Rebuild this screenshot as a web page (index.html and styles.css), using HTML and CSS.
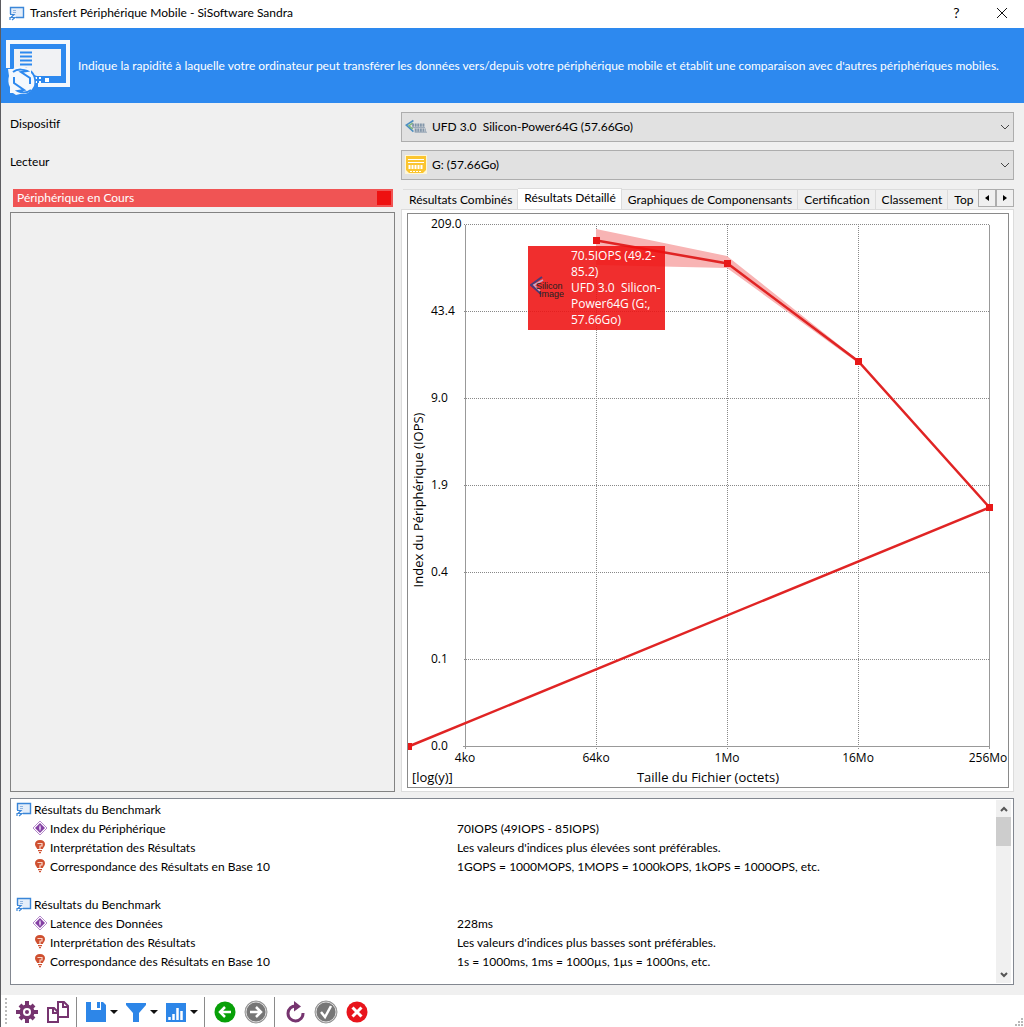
FILE: index.html
```html
<!DOCTYPE html>
<html lang="fr">
<head>
<meta charset="utf-8">
<title>Transfert Périphérique Mobile - SiSoftware Sandra</title>
<link rel="stylesheet" href="styles.css">
</head>
<body>
<svg class="defs" aria-hidden="true">
  <symbol id="device" viewBox="0 0 16 16">
    <path d="M1.500 9V2.500h13v10H7" fill="#e4eefa" stroke="#3a86d8" stroke-width="1.400"/>
    <path d="M4 5.500h3M4 7.500h3" stroke="#8fb4e0"/>
    <path d="M1 9.500h4l-3 3h4l-3 2.500M1 12v3M10 12.500h2" fill="none" stroke="#3a86d8" stroke-width="1.200"/>
  </symbol>
  <symbol id="index" viewBox="0 0 16 16">
    <path d="M8 1L15 8 8 15 1 8z" fill="#fff" stroke="#b58acb" stroke-width="1"/>
    <path d="M8 3L13 8 8 13 3 8z" fill="#8440a4"/>
    <path d="M8 5.500v5M7 8h2" stroke="#e9d8f2" stroke-width="1.200"/>
  </symbol>
  <symbol id="bulb" viewBox="0 0 16 16">
    <path d="M8 1C4.800 1 3 2.800 3 5.200c0 2 1.500 2.800 2.200 4.800H10.800C11.500 8 13 7.200 13 5.200 13 2.800 11.200 1 8 1z" fill="#cf5030"/>
    <path d="M5.500 4.500h4.500v2.500H8v3" fill="none" stroke="#f8d8cc" stroke-width="1.200"/>
    <path d="M6 11.700h4M7 13.700h2" stroke="#cf5030" stroke-width="1.200"/>
  </symbol>
</svg>

<header class="titlebar">
  <svg class="icon16" aria-hidden="true"><use href="#device"/></svg>
  <h1>Transfert Périphérique Mobile - SiSoftware Sandra</h1>
  <button class="caption" aria-label="Aide">?</button>
  <button class="caption" aria-label="Fermer"><svg width="12" height="12"><path d="M1 1l10 10M11 1L1 11" stroke="#111"/></svg></button>
</header>

<section class="banner">
  <svg class="banner-icon" viewBox="0 0 64 56" aria-hidden="true">
    <path d="M2 28V2h60v43H32" fill="none" stroke="#f4f8fd" stroke-width="4"/>
    <path d="M8 9h47v27H31L8 28z" fill="#f1f2f4"/>
    <path d="M14 12.500h12M14 16.500h12M14 20.500h12M14 24.500h12" stroke="#2d89ef" stroke-width="2"/>
    <path d="M39 38h4v4h-4zM29 37h2v2h-2zM33 37h2v2h-2zM29 41h2v2h-2zM33 41h2v2h-2z" fill="#fff"/>
    <circle cx="16" cy="41" r="14" fill="#2d89ef"/>
    <path d="M2 29h5c4-3 10-3 14-1h4v5c3 3 4 8 3 13-2 4-5 7-9 8h-5l-4 1-3-2H4v-6c-2-3-2-8-1-11z" fill="#f4f8fd"/>
    <path d="M7 32c5-4 12-2 14-1l-6 1 9 6v6M25 50c-4 3-9 3-13 1l6-1-10-7v-6" fill="none" stroke="#2d89ef" stroke-width="2"/>
  </svg>
  <p>Indique la rapidité à laquelle votre ordinateur peut transférer les données vers/depuis votre périphérique mobile et établit une comparaison avec d'autres périphériques mobiles.</p>
</section>

<main>
  <div class="field">
    <label for="device-select">Dispositif</label>
    <div class="combo">
      <svg class="combo-icon" viewBox="0 0 34 24" aria-hidden="true">
        <path d="M13 2L2 9l11 10" fill="none" stroke="#4d8fc0" stroke-width="2.500"/>
        <path d="M12 6L6 10l6 5" fill="none" stroke="#7bb77a" stroke-width="2"/>
        <path d="M11 9h19M15 17h17" stroke="#8296aa" stroke-width="5" stroke-dasharray="3 1"/>
        <path d="M11 13h20M15 20h19" stroke="#66809a" stroke-width="1"/>
      </svg>
      <select id="device-select"><option>UFD 3.0 &nbsp;Silicon-Power64G (57.66Go)</option></select>
      <svg class="chevron" width="10" height="6" aria-hidden="true"><path d="M1 1l4 4 4-4" fill="none" stroke="#444"/></svg>
    </div>
  </div>
  <div class="field">
    <label for="drive-select">Lecteur</label>
    <div class="combo">
      <svg class="combo-icon" viewBox="0 0 22 22" aria-hidden="true">
        <path d="M0 1h22v19H0z" fill="#fff6d6"/>
        <path d="M1 2h20v14l-3 3H4l-3-3z" fill="#fbc530"/>
        <path d="M3 5.500h16M3 8.500h16" stroke="#fff" stroke-width="1"/>
        <path d="M4.500 11v4M7.500 11v4M10.500 11v4M13.500 11v4M16.500 11v4" stroke="#fff" stroke-width="2"/>
        <path d="M5 17.500h12" stroke="#fff" stroke-dasharray="2 1"/>
      </svg>
      <select id="drive-select"><option>G: (57.66Go)</option></select>
      <svg class="chevron" width="10" height="6" aria-hidden="true"><path d="M1 1l4 4 4-4" fill="none" stroke="#444"/></svg>
    </div>
  </div>

  <div class="panes">
    <section class="current">
      <h2>Périphérique en Cours<span class="swatch"></span></h2>
      <div class="current-list"></div>
    </section>

    <section class="details">
      <div class="tabbar">
        <div class="tabs" role="tablist">
          <button role="tab">Résultats Combinés</button>
          <button role="tab" class="active" aria-selected="true">Résultats Détaillé</button>
          <button role="tab">Graphiques de Componensants</button>
          <button role="tab">Certification</button>
          <button role="tab">Classement</button>
          <button role="tab">Top</button>
        </div>
        <button class="spin" aria-label="Onglet précédent"><svg width="4" height="6"><path d="M4 0v6L0 3z"/></svg></button>
        <button class="spin" aria-label="Onglet suivant"><svg width="4" height="6"><path d="M0 0v6l4-3z"/></svg></button>
      </div>
      <div class="tabpanel">
        <div class="chart">
          <svg viewBox="0 0 600 573" role="img" aria-label="Index du Périphérique selon la taille du fichier">
            <path class="grid" d="M56 10.500H582M56 97.500H582M56 184.500H582M56 271.500H582M56 358.500H582M56 445.500H582M188.500 10V535M319.500 10V535M450.500 10V535"/>
            <path class="axis" d="M57.500 11V535M55 532.500H582M581.500 11V535"/>
            <g class="tick">
              <text x="23" y="14">209.0</text><text x="23" y="101">43.4</text><text x="23" y="188">9.0</text>
              <text x="23" y="275">1.9</text><text x="23" y="362">0.4</text><text x="23" y="449">0.1</text><text x="23" y="536">0.0</text>
            </g>
            <g class="tick middle">
              <text x="57" y="548">4ko</text><text x="188" y="548">64ko</text><text x="319" y="548">1Mo</text>
              <text x="450" y="548">16Mo</text><text x="580" y="548">256Mo</text>
            </g>
            <g class="axis-title">
              <text x="4" y="568">[log(y)]</text>
              <text x="300" y="568" class="middle">Taille du Fichier (octets)</text>
              <text transform="translate(15 286) rotate(-90)" class="middle">Index du Périphérique (IOPS)</text>
            </g>
            <path class="band" d="M188 15L319 42 450 146 450 149 319 54 188 51z"/>
            <path class="series" d="M188.500 26.500L319.500 49.500 450.500 147.500 581.500 293.500 0.500 532.500"/>
            <path class="marks" d="M185 23h7v7h-7zM316 46h7v7h-7zM447 144h7v7h-7zM578 290h7v7h-7zM-3 529h7v7h-7z"/>
          </svg>
          <div class="tip">
            <svg class="tip-logo" viewBox="0 0 34 24" aria-hidden="true">
              <path d="M12 1L1 9l10 9" fill="none" stroke="#4a3a78" stroke-width="2"/>
              <path d="M13 4L4 9l6 6" fill="none" stroke="#c8a8c8" stroke-width="1.500"/>
              <text x="6" y="13" class="logo-text">Silicon</text>
              <text x="9" y="21" class="logo-text">Image</text>
            </svg>
            <p>70.5IOPS (49.2-<br>85.2)<br>UFD 3.0 &nbsp;Silicon-<br>Power64G (G:,<br>57.66Go)</p>
          </div>
        </div>
      </div>
    </section>
  </div>

  <section class="results">
    <table>
      <tbody>
        <tr><th scope="rowgroup" colspan="2"><svg class="icon16"><use href="#device"/></svg>Résultats du Benchmark</th></tr>
        <tr><td class="name"><svg class="icon16"><use href="#index"/></svg>Index du Périphérique</td><td>70IOPS (49IOPS - 85IOPS)</td></tr>
        <tr><td class="name"><svg class="icon16"><use href="#bulb"/></svg>Interprétation des Résultats</td><td>Les valeurs d'indices plus élevées sont préférables.</td></tr>
        <tr><td class="name"><svg class="icon16"><use href="#bulb"/></svg>Correspondance des Résultats en Base 10</td><td>1GOPS = 1000MOPS, 1MOPS = 1000kOPS, 1kOPS = 1000OPS, etc.</td></tr>
        <tr><td colspan="2"></td></tr>
      </tbody>
      <tbody>
        <tr><th scope="rowgroup" colspan="2"><svg class="icon16"><use href="#device"/></svg>Résultats du Benchmark</th></tr>
        <tr><td class="name"><svg class="icon16"><use href="#index"/></svg>Latence des Données</td><td>228ms</td></tr>
        <tr><td class="name"><svg class="icon16"><use href="#bulb"/></svg>Interprétation des Résultats</td><td>Les valeurs d'indices plus basses sont préférables.</td></tr>
        <tr><td class="name"><svg class="icon16"><use href="#bulb"/></svg>Correspondance des Résultats en Base 10</td><td>1s = 1000ms, 1ms = 1000µs, 1µs = 1000ns, etc.</td></tr>
      </tbody>
    </table>
    <div class="scrollbar">
      <button aria-label="Défiler vers le haut"><svg width="8" height="6"><path d="M1 5l3-3 3 3" fill="none" stroke="#555" stroke-width="2"/></svg></button>
      <div class="thumb"></div>
      <button aria-label="Défiler vers le bas"><svg width="8" height="6"><path d="M1 1l3 3 3-3" fill="none" stroke="#555" stroke-width="2"/></svg></button>
    </div>
  </section>
</main>

<footer class="toolbar">
  <span class="grip"></span>
  <button aria-label="Options"><svg width="22" height="22" viewBox="0 0 22 22"><g stroke="#76346f" stroke-width="4"><path d="M11 0v22M0 11h22M4 4l14 14M18 4L4 18"/></g><circle cx="11" cy="11" r="7.500" fill="#76346f"/><circle cx="11" cy="11" r="4" fill="#fff"/><circle cx="11" cy="11" r="2" fill="#76346f"/></svg></button>
  <button aria-label="Copier"><svg width="22" height="22" viewBox="0 0 22 22" fill="#fff" stroke="#76346f" stroke-width="2"><path d="M11 1h6l4 4v11H11z"/><path d="M16 1v5h5" fill="none"/><path d="M1 7h6l4 4v10H1z"/><path d="M6 7v5h5" fill="none"/></svg></button>
  <span class="sep"></span>
  <button class="menu" aria-label="Enregistrer"><svg width="22" height="22" viewBox="0 0 22 22"><path d="M1 1h17l3 3v17H1z" fill="#2d86e8"/><path d="M6 1h10v8H6z" fill="#fff"/><path d="M12 1h3v6h-3z" fill="#2d86e8"/></svg><i class="caret"></i></button>
  <button class="menu" aria-label="Filtrer"><svg width="22" height="22" viewBox="0 0 22 22"><path d="M1 2h20v2l-7 8v9H8v-9L1 4z" fill="#2d86e8"/></svg><i class="caret"></i></button>
  <button class="menu" aria-label="Graphique"><svg width="22" height="22" viewBox="0 0 22 22"><path d="M1 2h20v19H1z" fill="#2d86e8"/><path d="M4.500 19v-3M8.500 19v-6M12.500 19V7M16.500 19v-9" stroke="#fff" stroke-width="2.500"/></svg><i class="caret"></i></button>
  <span class="sep"></span>
  <button aria-label="Précédent"><svg width="22" height="22" viewBox="0 0 22 22"><circle cx="11" cy="11" r="10.500" fill="#08a008"/><path d="M17 11H6M11 6l-5 5 5 5" fill="none" stroke="#fff" stroke-width="2.500"/></svg></button>
  <button aria-label="Suivant"><svg width="24" height="24" viewBox="0 0 24 24"><circle cx="12" cy="12" r="11" fill="#777" stroke="#999"/><circle cx="12" cy="12" r="10" fill="none" stroke="#ddd"/><path d="M6 12h11M12 7l5 5-5 5" fill="none" stroke="#fff" stroke-width="2.500"/></svg></button>
  <span class="sep"></span>
  <button aria-label="Actualiser"><svg width="22" height="22" viewBox="0 0 22 22"><path d="M12 5a7.500 7.500 0 1 0 7 7" fill="none" stroke="#76346f" stroke-width="3"/><path d="M10 0l7 5.500-7 5z" fill="#76346f"/></svg></button>
  <button aria-label="Valider"><svg width="24" height="24" viewBox="0 0 24 24"><circle cx="12" cy="12" r="11" fill="#777" stroke="#999"/><circle cx="12" cy="12" r="10" fill="none" stroke="#ddd"/><path d="M7 12l4 5 6-11" fill="none" stroke="#fff" stroke-width="2.500"/></svg></button>
  <button aria-label="Annuler"><svg width="22" height="22" viewBox="0 0 22 22"><circle cx="11" cy="11" r="10.500" fill="#e8141c"/><path d="M6.500 6.500l9 9M15.500 6.500l-9 9" stroke="#fff" stroke-width="3"/></svg></button>
  <svg class="sizegrip" width="9" height="9" aria-hidden="true"><path d="M6 0h2v2H6zM3 3h2v2H3zM6 3h2v2H6zM0 6h2v2H0zM3 6h2v2H3zM6 6h2v2H6z" fill="#b8b8b8"/></svg>
</footer>
</body>
</html>
```
FILE: styles.css
```css
* { box-sizing: border-box; }

body {
  margin: 0;
  border-left: 1px solid #5c5c60;
  background: #f0f0f0;
  color: #000;
  font: 12px/16px Lato, "Open Sans", sans-serif;
}

h1, h2, p { margin: 0; font-size: inherit; font-weight: normal; }

button {
  display: flex;
  align-items: center;
  justify-content: center;
  padding: 0;
  border: 0;
  background: none;
  color: inherit;
  font: inherit;
}

svg { display: block; flex: none; }
.defs { position: absolute; width: 0; height: 0; }
.icon16 { width: 16px; height: 16px; }

/* Title bar */
.titlebar {
  display: flex;
  align-items: center;
  height: 28px;
  padding: 0 0 2px 8px;
  background: #fff;
}
.titlebar h1 { flex: 1; padding-left: 5px; }
.caption { width: 45px; height: 26px; font-size: 14px; }

/* Banner */
.banner {
  display: flex;
  align-items: center;
  gap: 8px;
  min-height: 75px;
  padding: 4px 5px 0;
  background: #2d89ef;
  color: #fff;
}
.banner p { padding-bottom: 4px; }
.banner-icon { width: 64px; height: 56px; }

/* Device and drive fields */
main { padding: 9px 10px 10px 9px; }
.field {
  display: grid;
  grid-template-columns: 385fr 613fr;
  column-gap: 6px;
  margin-bottom: 8px;
}
.field label { padding-top: 4px; }
.combo { display: grid; align-items: center; }
.combo > * { grid-area: 1 / 1; }
.combo select {
  width: 100%;
  height: 30px;
  padding: 0 24px 0 30px;
  border: 1px solid #adadad;
  border-radius: 0;
  background: #e1e1e1;
  color: #000;
  font: inherit;
  appearance: none;
}
.combo-icon { z-index: 1; width: 22px; height: 22px; margin-left: 4px; pointer-events: none; }
.logo-text { font: 9px "Liberation Sans", sans-serif; fill: #222; }
.chevron { z-index: 1; justify-self: end; margin-right: 4px; pointer-events: none; }

/* Panes */
.panes {
  display: grid;
  grid-template-columns: 385fr 613fr;
  column-gap: 6px;
}
.current { display: flex; flex-direction: column; }
.current h2 {
  display: flex;
  align-items: center;
  justify-content: space-between;
  height: 18px;
  margin: 1px 2px 5px 3px;
  padding: 0 2px 0 4px;
  background: #f05454;
  color: #fff;
}
.swatch { width: 14px; height: 14px; background: #ee1111; }
.current-list { flex: 1; border: 1px solid #828282; }

.details { min-width: 0; }
.tabbar { display: flex; height: 21px; }
.tabs {
  display: flex;
  flex: 1;
  min-width: 0;
  align-items: flex-end;
  padding-left: 2px;
  overflow: hidden;
}
.tabs button {
  flex: none;
  height: 20px;
  padding: 0 5px 0 6px;
  border: 1px solid #dcdcdc;
  border-width: 1px 1px 0 0;
  white-space: nowrap;
}
.tabs .active { height: 21px; padding-bottom: 2px; background: #fff; }
.spin {
  width: 18px;
  height: 18px;
  margin-top: 1px;
  border: 1px solid #adadad;
}

.tabpanel {
  padding: 3px 4px 3px 5px;
  border: 1px solid #dcdcdc;
  background: #fff;
}
.chart { position: relative; border: 1px solid #8a8a8a; }
.chart > svg { width: 100%; height: auto; }
.grid { stroke: #888; stroke-dasharray: 1 1; }
.axis { fill: none; stroke: #999; }
.tick, .axis-title, .tip { font-family: "Open Sans", "Noto Sans", sans-serif; }
.tick { font-size: 12px; }
.axis-title { font-size: 13px; }
.middle { text-anchor: middle; }
.band { fill: #f8b4b4; }
.series { fill: none; stroke: #e02424; stroke-width: 2.500; }
.marks { fill: #e81818; }

.tip {
  position: absolute;
  top: 32px;
  left: 120px;
  display: flex;
  align-items: center;
  gap: 7px;
  width: 137px;
  padding: 2px;
  background: rgb(238 17 17 / 88%);
  color: #fff;
}
.tip p { white-space: nowrap; }
.tip-logo { width: 34px; height: 24px; }

/* Results list */
.results {
  display: flex;
  margin-top: 6px;
  border: 1px solid #828790;
  background: #fff;
}
.results table {
  flex: 1;
  align-self: flex-start;
  margin: 1px 0 13px 5px;
  border-collapse: collapse;
  table-layout: fixed;
}
.results tr { height: 19px; }
.results th, .results td { padding: 0; font-weight: normal; text-align: left; white-space: nowrap; }
.results .name { width: 45%; padding-left: 16px; }
.results .icon16 { display: inline-block; margin-right: 2px; vertical-align: text-bottom; }
.scrollbar {
  display: flex;
  flex-direction: column;
  width: 15px;
  margin: 1px 2px 1px 0;
  background: #f0f0f0;
}
.scrollbar button { height: 17px; }
.scrollbar button:last-child { margin-top: auto; }
.thumb { height: 29px; background: #cdcdcd; }

/* Toolbar */
.toolbar {
  display: flex;
  align-items: center;
  gap: 1px;
  height: 32px;
  padding: 2px 0 0 4px;
  background: #fff;
}
.toolbar button { width: 30px; height: 30px; }
.toolbar .menu { width: 39px; gap: 3px; }
.grip { width: 2px; height: 28px; margin-right: 4px; background: repeating-linear-gradient(#bbb 0 2px, #fff 2px 4px); }
.sep { width: 1px; height: 30px; margin: 0 4px 0 2px; background: #8a8a8a; }
.caret { border: 4px solid transparent; border-top-color: #111; border-bottom: 0; }
.sizegrip { align-self: flex-end; margin-left: auto; }
```
